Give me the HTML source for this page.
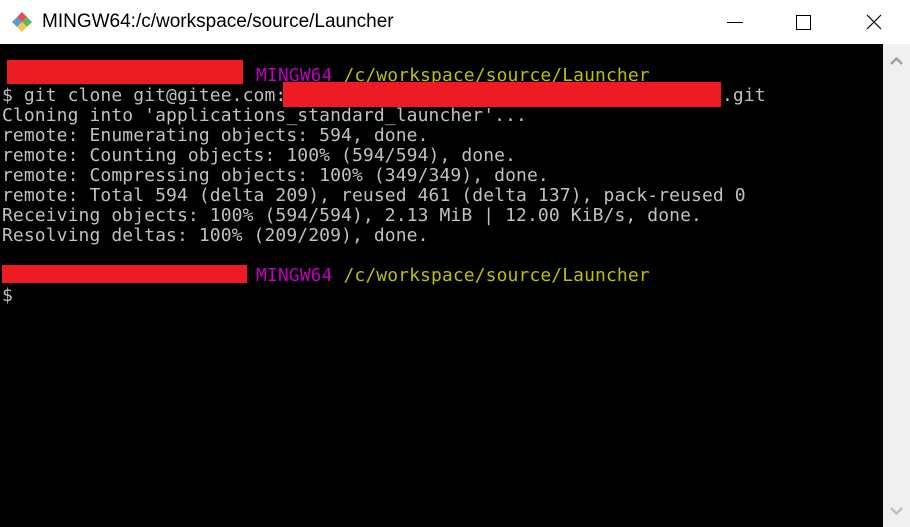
<!DOCTYPE html>
<html><head><style>
body{margin:0;width:910px;height:527px;overflow:hidden;background:#000;position:relative;font-family:"Liberation Sans",sans-serif}
#title{position:absolute;left:0;top:0;width:910px;height:44px;background:#fff}
#title .t{position:absolute;left:42px;top:11px;font-size:19px;color:#000}
#term{position:absolute;left:0;top:44px;width:883px;height:483px;background:#000}
#sb{position:absolute;left:883px;top:44px;width:27px;height:483px;background:#f0f0f0}
.l{position:absolute;left:2px;font-family:"DejaVu Sans Mono","Liberation Mono",monospace;font-size:18px;letter-spacing:0.1px;color:#c0c0c0;white-space:pre;line-height:20px}
.p{color:#bf00bf}.y{color:#bfbf00}
.r{position:absolute;background:#ed1c24}
</style></head><body>
<div id="title">
<svg style="position:absolute;left:11px;top:11px" width="22" height="22" viewBox="0 0 22 22">
<path d="M11 1 L16 6 L11 11 L6 6Z" fill="#e84d4d"/>
<path d="M16 6 L21 11 L16 16 L11 11Z" fill="#5cb85c"/>
<path d="M11 11 L16 16 L11 21 L6 16Z" fill="#f0c94a"/>
<path d="M6 6 L11 11 L6 16 L1 11Z" fill="#5b9bd5"/>
</svg>
<div class="t">MINGW64:/c/workspace/source/Launcher</div>
<div style="position:absolute;left:727px;top:22px;width:16px;height:1px;background:#000"></div>
<div style="position:absolute;left:796px;top:15px;width:13px;height:13px;border:1px solid #000"></div>
<svg style="position:absolute;left:866px;top:14px" width="16" height="16"><path d="M1 1L15 15M15 1L1 15" stroke="#000" stroke-width="1.2"/></svg>
</div>
<div id="term"></div>
<div id="sb">
<svg style="position:absolute;left:7px;top:13px" width="13" height="8"><path d="M1 7L6.5 1.5L12 7" stroke="#a0a0a0" stroke-width="2.5" fill="none"/></svg>
<svg style="position:absolute;left:7px;top:463px" width="13" height="8"><path d="M1 1L6.5 6.5L12 1" stroke="#c0c0c0" stroke-width="2.5" fill="none"/></svg>
</div>
<div class="l" style="top:66px;left:256px"><span class="p">MINGW64</span> <span class="y">/c/workspace/source/Launcher</span></div>
<div class="l" style="top:86px">$ git clone git@gitee.com:</div>
<div class="l" style="top:86px;left:722px">.git</div>
<div class="l" style="top:106px">Cloning into 'applications_standard_launcher'...</div>
<div class="l" style="top:126px">remote: Enumerating objects: 594, done.</div>
<div class="l" style="top:146px">remote: Counting objects: 100% (594/594), done.</div>
<div class="l" style="top:166px">remote: Compressing objects: 100% (349/349), done.</div>
<div class="l" style="top:186px">remote: Total 594 (delta 209), reused 461 (delta 137), pack-reused 0</div>
<div class="l" style="top:206px">Receiving objects: 100% (594/594), 2.13 MiB | 12.00 KiB/s, done.</div>
<div class="l" style="top:226px">Resolving deltas: 100% (209/209), done.</div>
<div class="l" style="top:266px;left:256px"><span class="p">MINGW64</span> <span class="y">/c/workspace/source/Launcher</span></div>
<div class="l" style="top:286px">$</div>
<div class="r" style="left:7px;top:60px;width:236px;height:24px"></div>
<div class="r" style="left:283px;top:82px;width:438px;height:25px"></div>
<div class="r" style="left:2px;top:265px;width:245px;height:18px"></div>
</body></html>
